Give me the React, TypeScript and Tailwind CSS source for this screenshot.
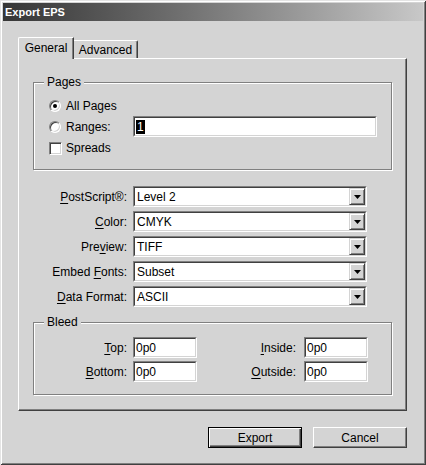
import React from "react";

const sunkenOuter =
  "border border-t-[#808080] border-l-[#808080] border-r-white border-b-white";
const sunkenInner =
  "border border-t-[#404040] border-l-[#404040] border-r-[#d4d4d4] border-b-[#d4d4d4] bg-white";

function U({ c }: { c: string }) {
  return <span className="underline underline-offset-[2px] decoration-1">{c}</span>;
}

function Select({ value }: { value: string }) {
  return (
    <div className={`h-[21px] w-[234px] flex ${sunkenOuter}`}>
      <div className={`flex-1 flex items-stretch ${sunkenInner}`}>
        <div className="flex-1 flex items-center pl-[2px]">{value}</div>
        <div className="w-[16px] bg-[#d4d4d4] border border-t-[#d4d4d4] border-l-[#d4d4d4] border-r-[#404040] border-b-[#404040] shadow-[inset_1px_1px_0_#fff,inset_-1px_-1px_0_#808080] flex items-center justify-center">
          <svg width="7" height="4" viewBox="0 0 7 4">
            <polygon points="0,0 7,0 3.5,4" fill="#000" />
          </svg>
        </div>
      </div>
    </div>
  );
}

function TextInput({ w, children }: { w: string; children: React.ReactNode }) {
  return (
    <div className={`h-[21px] ${w} flex ${sunkenOuter}`}>
      <div className={`flex-1 flex items-center pl-[1px] ${sunkenInner}`}>{children}</div>
    </div>
  );
}

function Radio({ checked }: { checked?: boolean }) {
  return (
    <div className="w-[12px] h-[12px] rounded-full bg-white border border-t-[#808080] border-l-[#808080] border-r-white border-b-white shadow-[inset_1px_1px_0_#404040,inset_-1px_-1px_0_#d4d4d4] flex items-center justify-center shrink-0">
      {checked && <div className="w-[4px] h-[4px] rounded-full bg-black" />}
    </div>
  );
}

function Group({
  label,
  h,
  children,
}: {
  label: string;
  h: string;
  children: React.ReactNode;
}) {
  return (
    <div
      className={`relative w-[359px] ${h} border border-[#808080] shadow-[1px_1px_0_#fff,inset_1px_1px_0_#fff]`}
    >
      <div className="absolute left-[10px] top-[-8px] px-[3px] bg-[#d4d4d4] leading-[14px]">
        {label}
      </div>
      {children}
    </div>
  );
}

function Row({ label, value }: { label: React.ReactNode; value: string }) {
  return (
    <div className="flex items-center h-[21px]">
      <div className="w-[94px] text-right">{label}</div>
      <div className="ml-[6px]">
        <Select value={value} />
      </div>
    </div>
  );
}

export default function App() {
  return (
    <div className="w-[426px] h-[465px] bg-[#d4d4d4] flex flex-col font-['Liberation_Sans',Arial,sans-serif] text-[12px] leading-[14px] text-black shadow-[inset_1px_1px_0_#e4e4e4,inset_-1px_-1px_0_#404040,inset_2px_2px_0_#fff,inset_-2px_-2px_0_#808080]">
      {/* title bar */}
      <div className="mx-[3px] mt-[3px] h-[18px] bg-linear-to-r from-[#363636] to-[#c8c8c8] flex items-center pl-[2px] text-white font-bold text-[11px]">
        Export EPS
      </div>

      <div className="pl-[18px] pr-[19px] mt-[16px] flex flex-col">
        {/* tabs */}
        <div className="flex items-end">
          <div className="relative z-10 -mb-px h-[22px] w-[56px] bg-[#d4d4d4] border-t border-l border-t-white border-l-white border-r border-r-[#404040] shadow-[inset_-1px_0_0_#808080] rounded-tl-[2px] flex items-center justify-center pb-[1px]">
            General
          </div>
          <div className="h-[18px] w-[64px] bg-[#d4d4d4] border-t border-t-white border-r border-r-[#404040] shadow-[inset_-1px_0_0_#808080] rounded-tr-[2px] flex items-center justify-center pt-[1px]">
            Advanced
          </div>
        </div>

        {/* panel */}
        <div className="h-[353px] border border-t-white border-l-white border-r-[#404040] border-b-[#404040] shadow-[inset_-1px_-1px_0_#808080] pt-[23px] pl-[14px] flex flex-col">
          <Group label="Pages" h="h-[88px]">
            <div className="pl-[15px] pt-[15px] flex flex-col">
              <div className="h-[16px] flex items-center">
                <Radio checked />
                <span className="ml-[5px]">All Pages</span>
              </div>
              <div className="mt-[2px] h-[21px] flex items-center">
                <div className="w-[84px] flex items-center">
                  <Radio />
                  <span className="ml-[5px]">Ranges:</span>
                </div>
                <TextInput w="w-[244px]">
                  <span className="bg-black text-white px-[1px] leading-[14px]">1</span>
                </TextInput>
              </div>
              <div className="mt-[3px] h-[16px] flex items-center">
                <div className="w-[13px] h-[13px] bg-white border border-t-[#808080] border-l-[#808080] border-r-white border-b-white shadow-[inset_1px_1px_0_#404040,inset_-1px_-1px_0_#d4d4d4]" />
                <span className="ml-[4px]">Spreads</span>
              </div>
            </div>
          </Group>

          <div className="mt-[16px] flex flex-col gap-[4px]">
            <Row
              label={
                <>
                  <U c="P" />
                  ostScript®:
                </>
              }
              value="Level 2"
            />
            <Row
              label={
                <>
                  <U c="C" />
                  olor:
                </>
              }
              value="CMYK"
            />
            <Row
              label={
                <>
                  Pre
                  <U c="v" />
                  iew:
                </>
              }
              value="TIFF"
            />
            <Row
              label={
                <>
                  Embed <U c="F" />
                  onts:
                </>
              }
              value="Subset"
            />
            <Row
              label={
                <>
                  <U c="D" />
                  ata Format:
                </>
              }
              value="ASCII"
            />
          </div>

          <div className="mt-[15px]">
            <Group label="Bleed" h="h-[73px]">
              <div className="pt-[14px] flex flex-col gap-[3px]">
                <div className="flex items-center h-[21px]">
                  <div className="w-[93px] text-right">
                    <U c="T" />
                    op:
                  </div>
                  <div className="ml-[6px]">
                    <TextInput w="w-[64px]">0p0</TextInput>
                  </div>
                  <div className="w-[99px] text-right">
                    <U c="I" />
                    nside:
                  </div>
                  <div className="ml-[8px]">
                    <TextInput w="w-[64px]">0p0</TextInput>
                  </div>
                </div>
                <div className="flex items-center h-[21px]">
                  <div className="w-[93px] text-right">
                    <U c="B" />
                    ottom:
                  </div>
                  <div className="ml-[6px]">
                    <TextInput w="w-[64px]">0p0</TextInput>
                  </div>
                  <div className="w-[99px] text-right">
                    <U c="O" />
                    utside:
                  </div>
                  <div className="ml-[8px]">
                    <TextInput w="w-[64px]">0p0</TextInput>
                  </div>
                </div>
              </div>
            </Group>
          </div>
        </div>

        {/* buttons */}
        <div className="mt-[16px] flex justify-end gap-[11px]">
          <div className="w-[94px] h-[21px] border border-black shadow-[inset_1px_1px_0_#fff,inset_-1px_-1px_0_#404040,inset_-2px_-2px_0_#808080] flex items-center justify-center">
            Export
          </div>
          <div className="w-[94px] h-[21px] border border-t-white border-l-white border-r-[#404040] border-b-[#404040] shadow-[inset_-1px_-1px_0_#808080] flex items-center justify-center">
            Cancel
          </div>
        </div>
      </div>
    </div>
  );
}
